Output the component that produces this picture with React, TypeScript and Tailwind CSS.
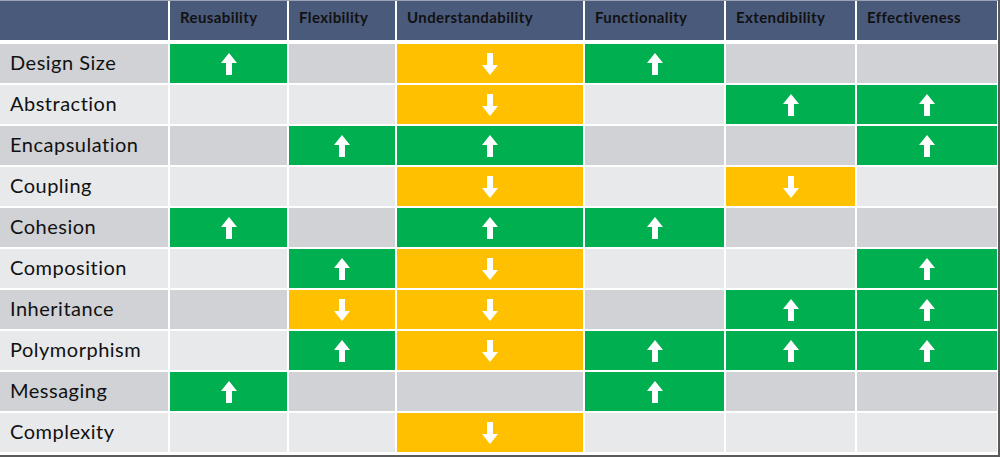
type Mark = "up" | "down" | null;

const columns = ["Reusability", "Flexibility", "Understandability", "Functionality", "Extendibility", "Effectiveness"];

const rows: { name: string; marks: Mark[] }[] = [
  { name: "Design Size", marks: ["up", null, "down", "up", null, null] },
  { name: "Abstraction", marks: [null, null, "down", null, "up", "up"] },
  { name: "Encapsulation", marks: [null, "up", "up", null, null, "up"] },
  { name: "Coupling", marks: [null, null, "down", null, "down", null] },
  { name: "Cohesion", marks: ["up", null, "up", "up", null, null] },
  { name: "Composition", marks: [null, "up", "down", null, null, "up"] },
  { name: "Inheritance", marks: [null, "down", "down", null, "up", "up"] },
  { name: "Polymorphism", marks: [null, "up", "down", "up", "up", "up"] },
  { name: "Messaging", marks: ["up", null, null, "up", null, null] },
  { name: "Complexity", marks: [null, null, "down", null, null, null] },
];

function Arrow({ dir }: { dir: "up" | "down" }) {
  return (
    <svg width="16" height="22" viewBox="0 0 16 22" className={dir === "down" ? "rotate-180" : ""}>
      <polygon points="8,0 16,10 11,10 11,22 5,22 5,10 0,10" fill="#fff" />
    </svg>
  );
}

export default function App() {
  return (
    <div className="h-[457px] w-[1000px] overflow-hidden bg-[#5a5a5a] font-['Lato',sans-serif]">
      <div className="h-[455px] w-[998px] bg-white">
        <div className="grid grid-cols-[168px_117px_106px_186px_139px_129px_140px] gap-x-[2px] border-t border-[#9aa3b5]">
          <div className="h-[39px] bg-[#4a5a7b]" />
          {columns.map((c) => (
            <div key={c} className="flex h-[39px] items-center bg-[#4a5a7b] pb-[7px] pl-[10px] text-[15px] font-bold tracking-[0.4px] text-[#111]">
              {c}
            </div>
          ))}
        </div>
        <div className="mt-[4px] flex flex-col gap-y-[2px]">
          {rows.map((r, i) => {
            const base = i % 2 === 0 ? "bg-[#d0d2d6]" : "bg-[#e8e9eb]";
            return (
              <div key={r.name} className="grid h-[39px] grid-cols-[168px_117px_106px_186px_139px_129px_140px] gap-x-[2px]">
                <div className={`flex items-center pb-[4px] pl-[10px] text-[20px] tracking-[0.5px] text-[#111] ${base}`}>{r.name}</div>
                {r.marks.map((m, j) => (
                  <div
                    key={j}
                    className={`flex items-center justify-center ${m === "up" ? "bg-[#00b050]" : m === "down" ? "bg-[#ffc000]" : base}`}
                  >
                    {m && <Arrow dir={m} />}
                  </div>
                ))}
              </div>
            );
          })}
        </div>
      </div>
    </div>
  );
}
